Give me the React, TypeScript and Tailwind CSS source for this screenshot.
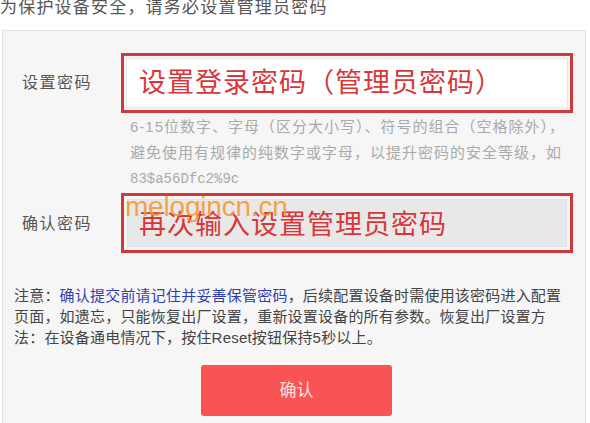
const cjk = "font-['Liberation_Sans','Noto_Sans_CJK_SC',sans-serif]";

const App = () => {
  return (
    <div className={`w-[590px] h-[423px] overflow-hidden bg-white ${cjk}`}>
      {/* Title */}
      <p className="-mt-[4px] text-[17px] leading-[23px] tracking-[1.2px] text-[#555]">
        为保护设备安全，请务必设置管理员密码
      </p>

      {/* Panel */}
      <div className="ml-[2px] mt-[11px] w-[584px] h-[420px] border border-[#e2e2e2] bg-[#f6f6f6] pt-[22px]">
        {/* Password */}
        <div className="flex items-center">
          <div className="w-[118px] pl-[19px] text-[16px] tracking-[1.5px] text-[#555]">设置密码</div>
          <div className="w-[452px] h-[60px] border-[3px] border-[#d13a3c] p-[2px]">
            <div className="h-full bg-white border border-[#e6e6e6] flex items-center pl-[12px] text-[27px] tracking-[1px] text-[#d9363a]">
              设置登录密码（管理员密码）
            </div>
          </div>
        </div>

        {/* Hint */}
        <div className="ml-[127px] mt-[1px] text-[15px] leading-[26px] tracking-[1px] text-[#aaa]">
          <p>6-15位数字、字母（区分大小写）、符号的组合（空格除外），</p>
          <p>避免使用有规律的纯数字或字母，以提升密码的安全等级，如</p>
          <p className="font-['Liberation_Mono',monospace] text-[14px] tracking-normal">83$a56Dfc2%9c</p>
        </div>

        {/* Confirm */}
        <div className="flex items-center mt-[1px]">
          <div className="w-[118px] pl-[19px] pt-[2px] text-[16px] tracking-[1.5px] text-[#555]">确认密码</div>
          <div className="relative w-[452px] h-[60px] border-[3px] border-[#d13a3c] p-[3px]">
            <div className="h-full bg-[#e8e8e8] border border-[#dde4ea] flex items-center pl-[11px] pt-[4px] text-[27px] tracking-[1px] text-[#d9363a]">
              再次输入设置管理员密码
            </div>
            <span className="absolute left-[1px] -top-[6px] text-[28px] leading-[34px] tracking-[-0.2px] text-[#f3962a]/85">
              melogincn.cn
            </span>
          </div>
        </div>

        {/* Note */}
        <p className="mt-[32px] px-[11px] text-[15px] leading-[21px] tracking-[0.2px] text-[#444]">
          注意：<span className="text-[#2f3fb0]">确认提交前请记住并妥善保管密码</span>，后续配置设备时需使用该密码进入配置页面，如遗忘，只能恢复出厂设置，重新设置设备的所有参数。恢复出厂设置方法：在设备通电情况下，按住Reset按钮保持5秒以上。
        </p>

        <button className="ml-[198px] mt-[17px] w-[191px] h-[51px] rounded-[3px] bg-[#fa5353] text-[17px] text-[#fde3e3]">
          确认
        </button>
      </div>
    </div>
  );
};

export default App;
